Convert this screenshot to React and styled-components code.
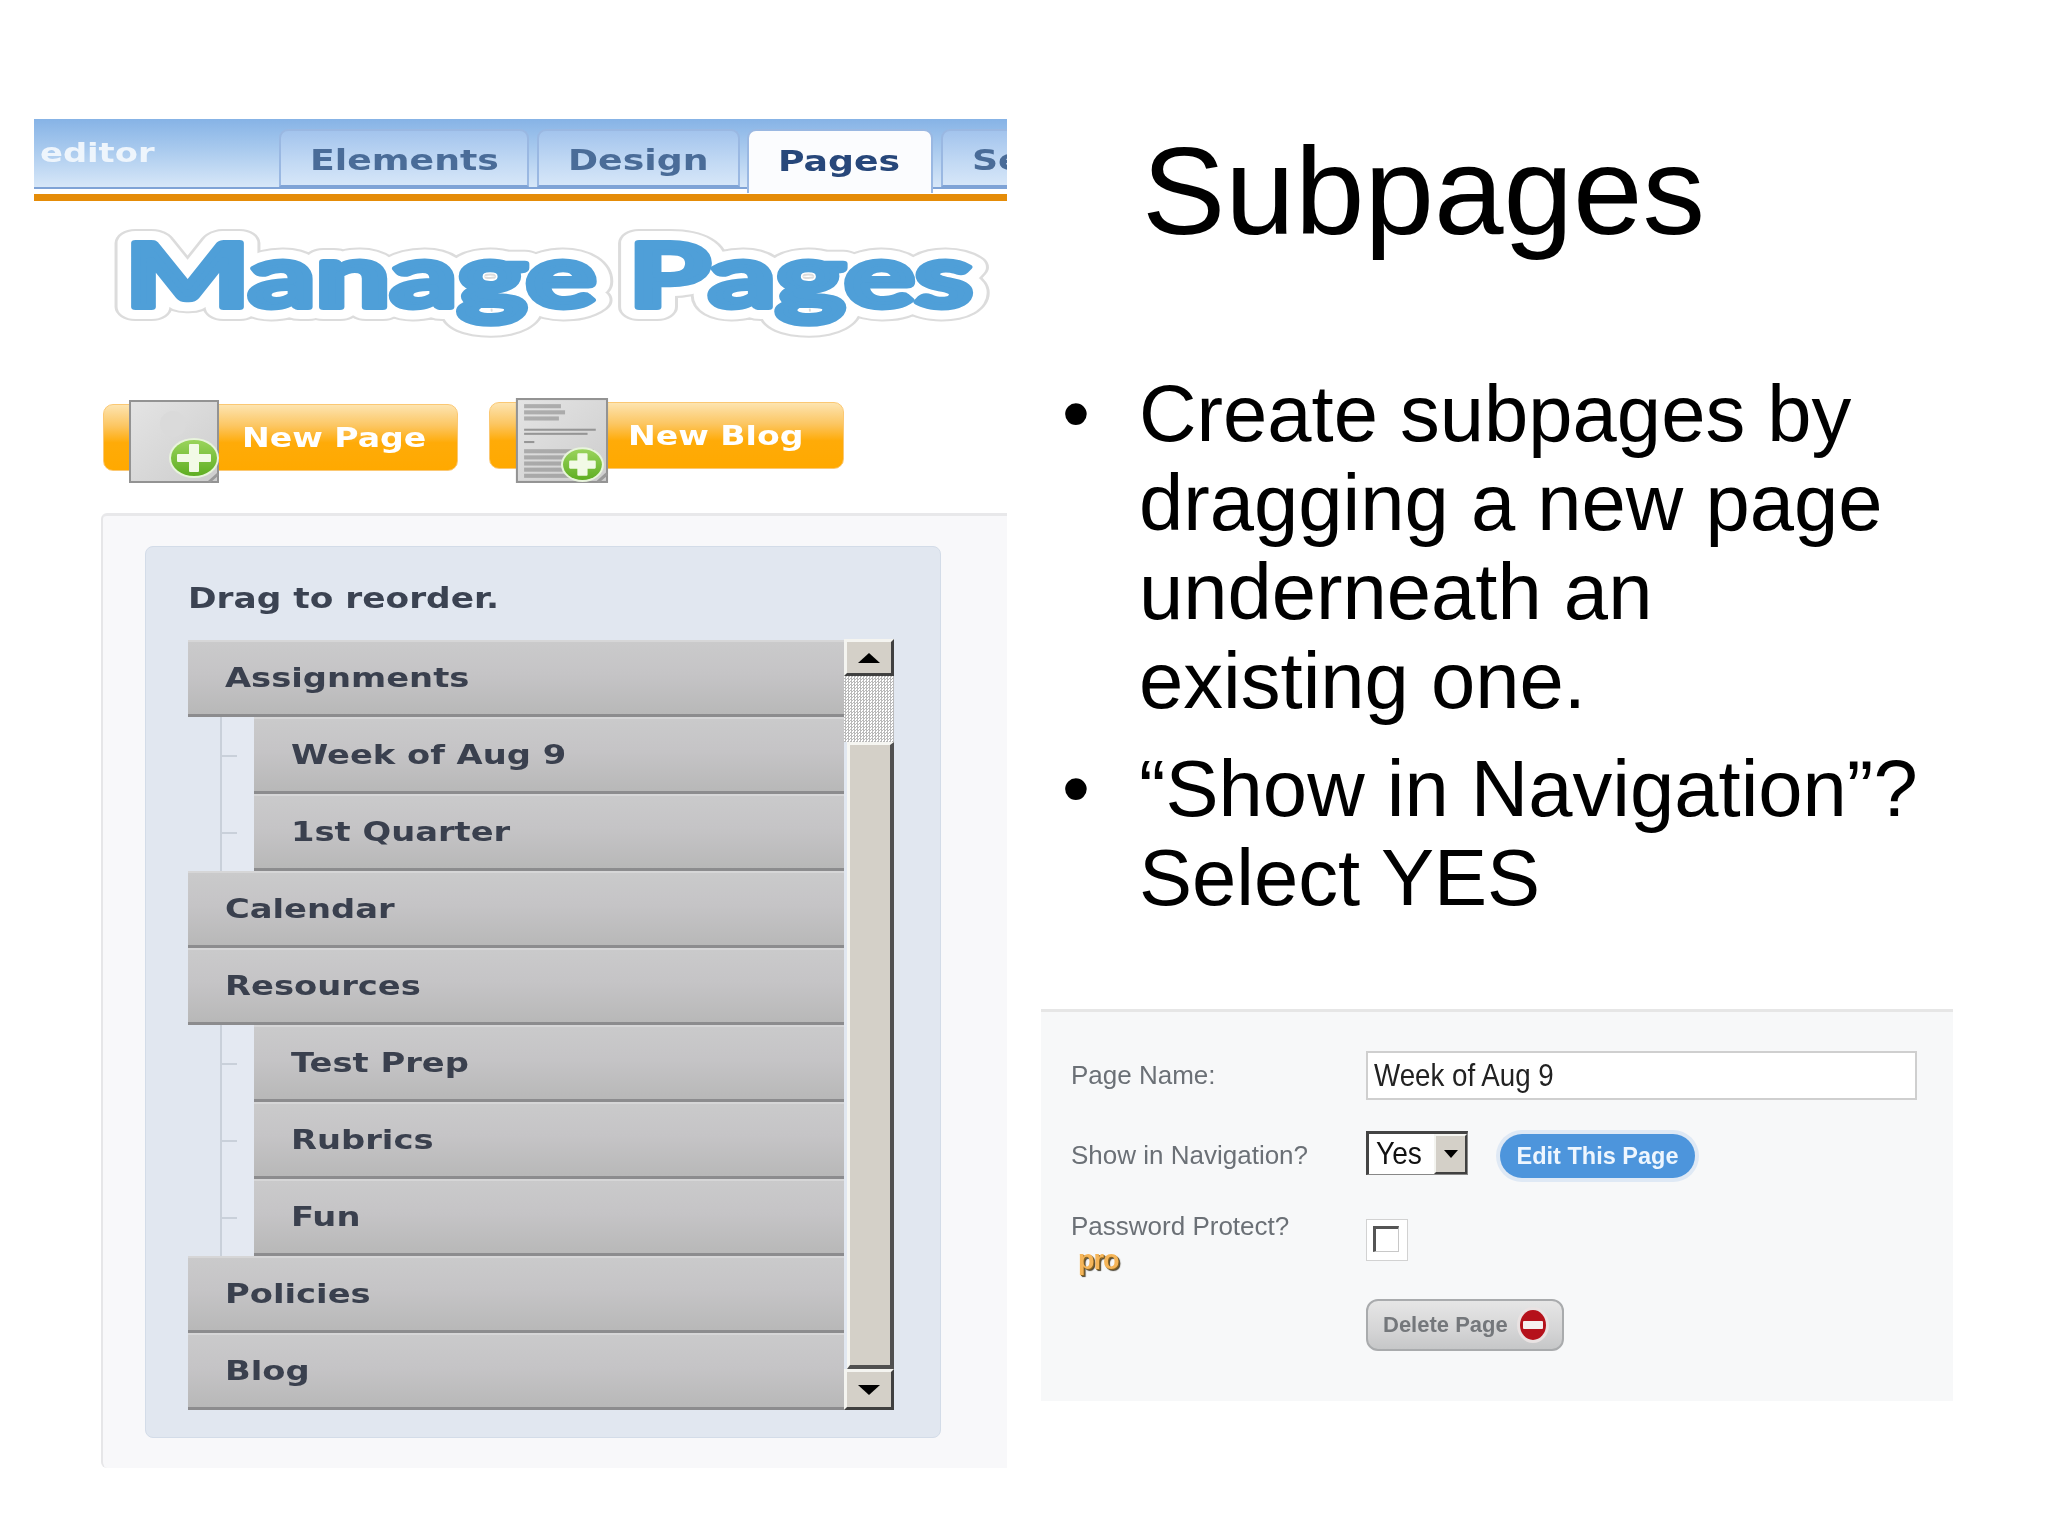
import React from 'react';
import styled, { createGlobalStyle } from 'styled-components';

const GlobalStyle = createGlobalStyle`
  html, body { margin: 0; padding: 0; background: #fff; }
  body { font-family: "Liberation Sans", Arial, sans-serif; }
`;

const Slide = styled.div`
  width: 2048px;
  height: 1536px;
  display: flex;
  overflow: hidden;
  background: #fff;
  padding-left: 34px;
  box-sizing: border-box;
`;

/* left column: the stretched, slightly soft editor screenshot */
const Shot = styled.div`
  width: 973px;
  flex: none;
  padding-top: 119px;
  filter: blur(0.55px);
`;

const Wide = styled.span`
  display: inline-block;
  white-space: nowrap;
  transform: scaleX(1.25);
  transform-origin: left center;
  font-family: "DejaVu Sans", Verdana, sans-serif;
  font-weight: 700;
  font-size: 27px;
`;

const Header = styled.div`
  height: 82px;
  box-sizing: border-box;
  overflow: hidden;
  border-bottom: 7px solid #e58c08;
`;

const Bar = styled.div`
  height: 70px;
  display: flex;
  align-items: flex-end;
  background: linear-gradient(180deg, #86b3e6 0%, #a9caee 45%, #d7e7f8 100%);
  border-bottom: 2px solid #7fa3d6;
  box-sizing: border-box;
`;

const Brand = styled.div`
  width: 245px;
  flex: none;
  align-self: center;
  padding: 0 0 2px 6px;
  box-sizing: border-box;
  color: #eef5fc;
`;

const Tab = styled.div`
  flex: none;
  width: ${p => p.$w}px;
  height: ${p => (p.$active ? 64 : 58)}px;
  margin-right: ${p => p.$gap || 10}px;
  margin-bottom: ${p => (p.$active ? -6 : 0)}px;
  padding: 4px 0 ${p => (p.$active ? 6 : 0)}px 29px;
  box-sizing: border-box;
  display: flex;
  align-items: center;
  color: ${p => (p.$active ? '#27477a' : '#4a6c98')};
  border: 2px solid #9ab8e2;
  border-bottom: ${p => (p.$active ? 'none' : '2px solid #7fa3d6')};
  border-radius: 9px 9px 0 0;
  background: ${p => (p.$active ? '#fbfcfe' : 'linear-gradient(180deg, #a3c4ed 0%, #c3daf4 60%, #d6e6f8 100%)')};
  position: relative;
  ${Wide} { font-size: 29px; }
`;

const LogoSvg = styled.svg`
  display: block;
  width: 973px;
  height: 160px;
`;

const LogoText = styled.text`
  font-family: "Lato", "DejaVu Sans", sans-serif;
  font-weight: 700;
  font-size: 88px;
  stroke-linejoin: round;
  stroke-linecap: round;
`;

const Actions = styled.div`
  height: 69px;
  margin-top: 41px;
  margin-left: 69px;
  display: flex;
  gap: 31px;
  align-items: flex-start;
`;

const NewButton = styled.div`
  position: relative;
  width: 355px;
  height: 67px;
  margin-top: ${p => p.$top || 0}px;
  padding-left: 138px;
  box-sizing: border-box;
  display: flex;
  align-items: center;
  border: 1px solid #fbc873;
  border-radius: 10px;
  background: linear-gradient(180deg, #fde4b0 0%, #fcc662 32%, #ffab08 58%, #ffa900 100%);
  color: #fff;
  svg { position: absolute; left: 25px; top: -5px; }
  ${Wide} { font-size: 26.5px; }
`;

const Panel = styled.div`
  margin-top: 42px;
  margin-left: 67px;
  height: 955px;
  box-sizing: border-box;
  padding: 30px 0 0 42px;
  background: #f8f8fa;
  border-top: 3px solid #e8e8ea;
  border-left: 2px solid #e6e6e8;
  border-radius: 6px 0 0 6px;
`;

const Reorder = styled.div`
  width: 796px;
  height: 892px;
  box-sizing: border-box;
  padding: 35px 0 0 42px;
  background: #e1e7f0;
  border: 1px solid #d3dce8;
  border-radius: 8px;
`;

const Hint = styled.div`
  height: 32px;
  line-height: 32px;
  margin-bottom: 26px;
  color: #3b4352;
  ${Wide} { font-size: 27.5px; }
`;

const ListArea = styled.div`
  display: flex;
  width: 706px;
  height: 770px;
`;

const Rows = styled.div`
  width: 656px;
  flex: none;
`;

const RowWrap = styled.div`
  display: flex;
  height: 77px;
`;

const Branch = styled.div`
  width: 66px;
  flex: none;
  box-sizing: border-box;
  padding-left: 32px;
  display: flex;
`;

const TreeLine = styled.div`
  position: relative;
  flex: 1;
  background: #e4e9f2;
  border-left: 2px solid #c9d0da;
  &::after {
    content: "";
    position: absolute;
    left: 0;
    top: 38px;
    width: 15px;
    height: 2px;
    background: #c9d0da;
  }
`;

const Row = styled.div`
  flex: 1;
  display: flex;
  align-items: center;
  box-sizing: border-box;
  padding: 0 0 2px 37px;
  background: linear-gradient(180deg, #cacacb 0%, #c5c4c6 45%, #b8b8b8 100%);
  border-top: 2px solid #d6d6d7;
  border-bottom: 3px solid #8c8c8e;
  color: #3a404e;
`;

const Scroller = styled.div`
  width: 50px;
  flex: none;
  display: flex;
  flex-direction: column;
  margin-top: -1px;
`;

const ScrollBtn = styled.div`
  height: ${p => p.$h}px;
  flex: none;
  box-sizing: border-box;
  display: flex;
  align-items: center;
  justify-content: center;
  background: #d4d0c8;
  border-style: solid;
  border-width: 3px;
  border-color: #f4f4f0 #404040 #404040 #f4f4f0;
  &::before {
    content: "";
    width: 0;
    height: 0;
    border-left: 11px solid transparent;
    border-right: 11px solid transparent;
    ${p => (p.$down ? 'border-top: 10px solid #000;' : 'border-bottom: 10px solid #000;')}
  }
`;

const Track = styled.div`
  height: 66px;
  flex: none;
  background-color: #fff;
  background-image: repeating-conic-gradient(#b9b9b9 0% 25%, #ffffff 0% 50%);
  background-size: 3px 3px;
`;

const Thumb = styled.div`
  flex: 1;
  margin-left: 3px;
  background: #d4d0c8;
  border-left: 3px solid #f6f6f2;
  border-top: 3px solid #f6f6f2;
  border-right: 4px solid #505050;
  border-bottom: 4px solid #505050;
`;

/* right column: slide text and the properties panel */
const Side = styled.div`
  width: 912px;
  flex: none;
  margin-left: 34px;
  padding-top: 119px;
`;

const Title = styled.h1`
  margin: 0;
  padding-left: 101px;
  font-size: 125px;
  font-weight: 400;
  line-height: 144px;
  color: #000;
`;

const Bullets = styled.ul`
  list-style: none;
  margin: 106px 0 0 21px;
  padding: 0;
  font-size: 79.6px;
  line-height: 89px;
  color: #000;
`;

const Bullet = styled.li`
  display: grid;
  grid-template-columns: 77px 1fr;
  margin-bottom: 19px;
  white-space: nowrap;
  &::before { content: "•"; }
`;

const Props = styled.div`
  height: 392px;
  margin-top: 87px;
  box-sizing: border-box;
  padding: 39px 0 0 30px;
  background: #f7f8f9;
  border-top: 3px solid #e6e6e6;
  filter: blur(0.5px);
`;

const FormRow = styled.div`
  display: grid;
  grid-template-columns: 295px 1fr;
  margin-top: ${p => p.$top || 0}px;
`;

const Label = styled.div`
  font-size: 26px;
  line-height: ${p => (p.$top ? 20 : 46)}px;
  margin-top: ${p => (p.$top ? -3 : 0)}px;
  color: #6b7076;
  white-space: nowrap;
`;

const NameLabel = styled(Label)`
  line-height: 49px;
`;

const Narrow = styled.span`
  display: inline-block;
  white-space: nowrap;
  transform: scaleX(0.88);
  transform-origin: left center;
`;

const TextBox = styled.div`
  width: 551px;
  height: 49px;
  box-sizing: border-box;
  padding-left: 6px;
  background: #fff;
  border: 2px solid #cfcfcf;
  font-size: 31.5px;
  line-height: 44px;
  color: #222;
`;

const Inline = styled.div`
  display: flex;
  align-items: flex-start;
  gap: 32px;
`;

const Select = styled.div`
  width: 102px;
  height: 44px;
  margin-top: -1px;
  box-sizing: border-box;
  display: flex;
  justify-content: space-between;
  padding-left: 7px;
  background: #fff;
  border-style: solid;
  border-width: 3px 1px 1px 3px;
  border-color: #444 #888 #888 #444;
  font-size: 32px;
  line-height: 38px;
  color: #111;
`;

const SelectArrow = styled.div`
  width: 33px;
  flex: none;
  box-sizing: border-box;
  display: flex;
  align-items: center;
  justify-content: center;
  background: #d4d0c8;
  border-style: solid;
  border-width: 2px;
  border-color: #f4f4f0 #404040 #404040 #f4f4f0;
  &::before {
    content: "";
    border-left: 7px solid transparent;
    border-right: 7px solid transparent;
    border-top: 8px solid #000;
  }
`;

const EditButton = styled.div`
  width: 195px;
  height: 44px;
  margin-top: 2px;
  border-radius: 22px;
  background: #4d95dc;
  box-shadow: 0 0 0 4px #dfe9f5;
  color: #eef6fe;
  font-size: 23.5px;
  font-weight: 700;
  line-height: 44px;
  text-align: center;
`;

const Pro = styled.div`
  width: 43px;
  margin: 11px 0 0 7px;
  font-size: 27px;
  font-weight: 700;
  line-height: 26px;
  letter-spacing: -1px;
  color: #f5b559;
  text-shadow: 1px 1px 0 #8a6420, 2px 2px 1px #4a4436;
`;

const CheckOuter = styled.div`
  width: 42px;
  height: 42px;
  box-sizing: border-box;
  padding: 6px;
  background: #fff;
  border: 1px solid #d2d2d2;
`;

const CheckInner = styled.div`
  width: 26px;
  height: 26px;
  box-sizing: border-box;
  background: #fff;
  border-style: solid;
  border-width: 3px 1px 1px 3px;
  border-color: #555 #c8c8c8 #c8c8c8 #555;
`;

const DeleteButton = styled.div`
  width: 198px;
  height: 52px;
  box-sizing: border-box;
  display: flex;
  align-items: center;
  justify-content: space-between;
  padding: 0 12px 0 15px;
  border: 2px solid #a9abad;
  border-radius: 12px;
  background: linear-gradient(180deg, #e6e6e6 0%, #d5d5d6 60%, #c6c7c8 100%);
  color: #74777b;
  font-size: 22px;
  font-weight: 700;
  white-space: nowrap;
`;

function DocIcon({ width, height, lines }) {
  const id = lines ? 'blogPaper' : 'pagePaper';
  const cx = 65;
  const cy = lines ? 65 : 58;
  const rx = lines ? 19 : 23;
  const ry = lines ? 15 : 18;
  return (
    <svg width={width} height={height} viewBox="0 0 92 84">
      <defs>
        <linearGradient id={id} x1="0" y1="0" x2="1" y2="1">
          <stop offset="0" stopColor="#e4e4e4" />
          <stop offset="1" stopColor="#cdcdcd" />
        </linearGradient>
        <linearGradient id={`${id}Green`} x1="0" y1="0" x2="0" y2="1">
          <stop offset="0" stopColor="#9ad45c" />
          <stop offset="1" stopColor="#5fae22" />
        </linearGradient>
      </defs>
      <rect x="1" y="1" width="88" height="81" fill={`url(#${id})`} stroke="#939393" strokeWidth="2" />
      <path d="M80 82l9-8" stroke="#9a9a9a" strokeWidth="3" fill="none" />
      {lines ? (
        <g fill="#8a8a8a">
          <rect x="8" y="6" width="36" height="4" opacity="0.6" />
          <rect x="8" y="12" width="40" height="4" opacity="0.6" />
          <rect x="8" y="18" width="34" height="4" opacity="0.6" />
          <rect x="8" y="30" width="70" height="2" opacity="0.85" />
          <rect x="8" y="34" width="62" height="2" opacity="0.85" />
          <rect x="8" y="42" width="10" height="2" opacity="0.85" />
          <rect x="8" y="50" width="68" height="4" opacity="0.6" />
          <rect x="8" y="56" width="68" height="4" opacity="0.6" />
          <rect x="8" y="62" width="50" height="4" opacity="0.6" />
          <rect x="8" y="68" width="50" height="4" opacity="0.6" />
          <rect x="8" y="74" width="50" height="4" opacity="0.6" />
        </g>
      ) : (
        <circle cx="44" cy="24" r="13" fill="#dadada" />
      )}
      <ellipse cx={cx} cy={cy} rx={rx + 2} ry={ry + 2} fill="#e8f4dc" />
      <ellipse cx={cx} cy={cy} rx={rx} ry={ry} fill={`url(#${id}Green)`} />
      <path
        d={`M${cx - 4} ${cy - ry + 5}h8v${ry - 8}h${rx - 11}v6h-${rx - 11}v${ry - 8}h-8v-${ry - 8}h-${rx - 11}v-6h${rx - 11}z`}
        fill="#f2fae6"
        stroke="#f2fae6"
        strokeWidth="2"
        strokeLinejoin="round"
      />
    </svg>
  );
}

function StopIcon() {
  return (
    <svg width="34" height="40" viewBox="0 0 34 40">
      <ellipse cx="17" cy="20" rx="16" ry="18" fill="#e9e2e2" />
      <ellipse cx="17" cy="20" rx="13" ry="15" fill="#b5111b" />
      <rect x="7" y="16" width="20" height="8" rx="1" fill="#f6efef" />
    </svg>
  );
}

const pages = [
  { name: 'Assignments' },
  { name: 'Week of Aug 9', sub: true },
  { name: '1st Quarter', sub: true },
  { name: 'Calendar' },
  { name: 'Resources' },
  { name: 'Test Prep', sub: true },
  { name: 'Rubrics', sub: true },
  { name: 'Fun', sub: true },
  { name: 'Policies' },
  { name: 'Blog' },
];

export default function App() {
  return (
    <>
      <GlobalStyle />
      <Slide>
        <Shot>
          <Header>
            <Bar>
              <Brand><Wide>editor</Wide></Brand>
              <Tab $w={250} $gap={8}><Wide>Elements</Wide></Tab>
              <Tab $w={203} $gap={7}><Wide>Design</Wide></Tab>
              <Tab $w={186} $gap={8} $active><Wide>Pages</Wide></Tab>
              <Tab $w={160}><Wide>Settings</Wide></Tab>
            </Bar>
          </Header>
          <LogoSvg viewBox="0 0 973 160">
            <use href="#logoWord" stroke="#dcdcdc" strokeWidth="28" fill="#dcdcdc" />
            <use href="#logoWord" stroke="#ffffff" strokeWidth="24" fill="#ffffff" />
            <g fill="#4f9fd8" stroke="#4f9fd8" strokeWidth="6">
              <LogoText id="logoWord" x="91" y="106" textLength="848" lengthAdjust="spacingAndGlyphs">
                Manage Pages
              </LogoText>
            </g>
          </LogoSvg>
          <Actions>
            <NewButton $top={2}>
              <DocIcon width={92} height={84} />
              <Wide>New Page</Wide>
            </NewButton>
            <NewButton>
              <DocIcon width={96} height={86} lines />
              <Wide>New Blog</Wide>
            </NewButton>
          </Actions>
          <Panel>
            <Reorder>
              <Hint><Wide>Drag to reorder.</Wide></Hint>
              <ListArea>
                <Rows>
                  {pages.map(page => (
                    <RowWrap key={page.name}>
                      {page.sub && <Branch><TreeLine /></Branch>}
                      <Row><Wide>{page.name}</Wide></Row>
                    </RowWrap>
                  ))}
                </Rows>
                <Scroller>
                  <ScrollBtn $h={37} />
                  <Track />
                  <Thumb />
                  <ScrollBtn $h={41} $down />
                </Scroller>
              </ListArea>
            </Reorder>
          </Panel>
        </Shot>
        <Side>
          <Title>Subpages</Title>
          <Bullets>
            <Bullet><div>Create subpages by<br />dragging a new page<br />underneath an<br />existing one.</div></Bullet>
            <Bullet><div>“Show in Navigation”?<br />Select YES</div></Bullet>
          </Bullets>
          <Props>
            <FormRow>
              <NameLabel>Page Name:</NameLabel>
              <TextBox><Narrow>Week of Aug 9</Narrow></TextBox>
            </FormRow>
            <FormRow $top={32}>
              <Label>Show in Navigation?</Label>
              <Inline>
                <Select><Narrow>Yes</Narrow><SelectArrow /></Select>
                <EditButton>Edit This Page</EditButton>
              </Inline>
            </FormRow>
            <FormRow $top={41}>
              <div>
                <Label $top>Password Protect?</Label>
                <Pro>pro</Pro>
              </div>
              <CheckOuter><CheckInner /></CheckOuter>
            </FormRow>
            <FormRow $top={26}>
              <div />
              <DeleteButton>Delete Page<StopIcon /></DeleteButton>
            </FormRow>
          </Props>
        </Side>
      </Slide>
    </>
  );
}
